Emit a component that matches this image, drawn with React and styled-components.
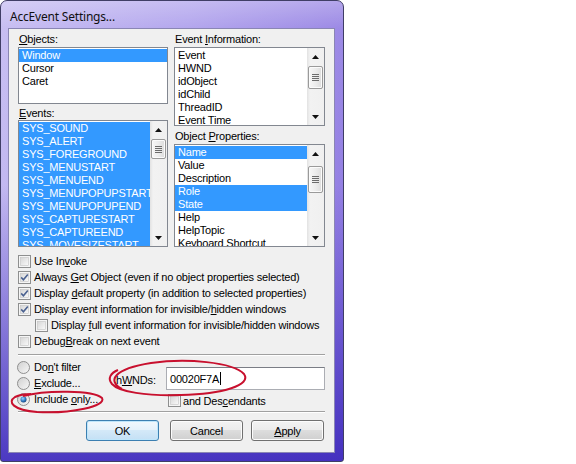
import React from 'react';
import styled, { createGlobalStyle } from 'styled-components';

const Global = createGlobalStyle`
  html, body { margin: 0; padding: 0; background: #ffffff; }
  body {
    width: 576px; height: 464px; overflow: hidden;
    font-family: "Liberation Sans", Arial, sans-serif;
    font-size: 11px; letter-spacing: -0.2px; color: #000;
  }
`;

const Window = styled.div`
  position: relative;
  width: 344px;
  height: 462px;
  box-sizing: border-box;
  border: 1px solid #403e66;
  border-radius: 7px 7px 3px 3px;
  padding: 0 8px 8px 7px;
  display: flex;
  flex-direction: column;
  background:
    linear-gradient(to bottom, rgba(255,255,255,0.3) 0px, rgba(255,255,255,0.08) 27px, rgba(70,50,190,0) 40%, rgba(55,35,185,0.85) 100%),
    linear-gradient(to right, #c3b9f1 0%, #ad9fec 55%, #9480e3 100%);
`;

const TitleBar = styled.div`
  height: 27px;
  flex: none;
  display: flex;
  align-items: center;
  padding-left: 2px;
  padding-top: 4px;
  box-sizing: border-box;
  font-family: "Noto Sans", "Open Sans", sans-serif;
  font-size: 12px;
  letter-spacing: -0.2px;
  color: #101010;
`;

const Client = styled.div`
  flex: 1;
  border: 1px solid #8a86b4;
  background: #f0f0f0;
  padding: 4px 9px 0 9px;
  display: flex;
  flex-direction: column;
`;

const TopGrid = styled.div`
  display: grid;
  grid-template-columns: 150px 151px;
  column-gap: 6px;
`;

const Column = styled.div`
  display: flex;
  flex-direction: column;
`;

const Label = styled.div`
  height: ${p => p.$h}px;
  padding-top: ${p => p.$pt || 0}px;
  padding-left: 1px;
  box-sizing: border-box;
  line-height: 13px;
  white-space: nowrap;
`;

const U = styled.span`
  text-decoration: underline;
  text-underline-offset: 1px;
`;

const ListBox = styled.div`
  height: ${p => p.$h}px;
  box-sizing: border-box;
  border: 1px solid #828790;
  background: #fff;
  display: flex;
  overflow: hidden;
`;

const Items = styled.div`
  flex: 1;
  min-width: 0;
  overflow: hidden;
  padding-top: 1px;
`;

const Item = styled.div`
  height: 13px;
  line-height: 13px;
  padding-left: 3px;
  white-space: nowrap;
  overflow: hidden;
  background: ${p => (p.$sel ? '#3399ff' : 'transparent')};
  color: ${p => (p.$sel ? '#ffffff' : '#000000')};
`;

const ScrollBar = styled.div`
  width: 17px;
  flex: none;
  display: flex;
  flex-direction: column;
  background: linear-gradient(to right, #e2e2e2 0px, #f2f2f2 3px, #f0f0f0 100%);
`;

const Arrow = styled.div`
  height: 17px;
  flex: none;
  display: flex;
  align-items: center;
  justify-content: center;
`;

const Track = styled.div`
  flex: 1;
  padding-top: ${p => p.$top}px;
`;

const Thumb = styled.div`
  height: ${p => p.$h}px;
  box-sizing: border-box;
  margin: 0 1px;
  border: 1px solid #9a9a9a;
  border-radius: 2px;
  background: linear-gradient(to right, #f7f7f7 0%, #ececec 50%, #dcdcdc 100%);
  box-shadow: inset 0 0 0 1px #fbfbfb;
  display: flex;
  align-items: center;
  justify-content: center;
`;

const Checks = styled.div`
  margin-top: 6px;
  display: flex;
  flex-direction: column;
`;

const CheckRow = styled.div`
  height: ${p => p.$h || 16}px;
  display: flex;
  align-items: center;
  gap: ${p => p.$gap || 3}px;
  padding-left: ${p => p.$indent || 0}px;
  white-space: nowrap;
  line-height: 13px;
`;

const Separator = styled.div`
  margin-top: ${p => p.$mt}px;
  height: 0;
  border-top: 1px solid #a0a0a0;
  border-bottom: 1px solid #ffffff;
`;

const Filter = styled.div`
  display: flex;
`;

const RadioGroup = styled.div`
  width: 97px;
  padding-top: 3px;
  margin-left: -1px;
  display: flex;
  flex-direction: column;
`;

const RadioRow = styled.div`
  height: 16px;
  display: flex;
  align-items: center;
  gap: 4px;
  white-space: nowrap;
`;

const HwndBlock = styled.div`
  display: flex;
  flex-direction: column;
  padding-top: 11px;
`;

const HwndRow = styled.div`
  display: flex;
  align-items: center;
`;

const HwndLabel = styled.div`
  width: 53px;
  padding-top: 3px;
  padding-left: 3px;
  box-sizing: border-box;
`;

const TextInput = styled.div`
  width: 159px;
  height: 23px;
  box-sizing: border-box;
  border: 1px solid #abadb3;
  border-top-color: #7a7d85;
  background: #fff;
  display: flex;
  align-items: center;
  padding-left: 3px;
`;

const Caret = styled.span`
  display: inline-block;
  width: 1px;
  height: 13px;
  background: #000;
  margin-left: 1px;
`;

const DescRow = styled.div`
  margin-top: 4px;
  margin-left: 55px;
  height: 13px;
  display: flex;
  align-items: center;
  gap: 2px;
  white-space: nowrap;
`;

const Buttons = styled.div`
  margin-top: 7px;
  padding-left: 68px;
  display: flex;
`;

const Button = styled.div`
  width: 73px;
  height: 21px;
  margin-left: ${p => p.$ml || 0}px;
  box-sizing: border-box;
  border: 1px solid ${p => (p.$default ? '#3c7fb1' : '#707070')};
  border-radius: 3px;
  display: flex;
  align-items: center;
  justify-content: center;
  box-shadow: inset 0 0 0 1px ${p => (p.$default ? '#bfe6fb' : '#fcfcfc')};
  background: ${p =>
    p.$default
      ? 'linear-gradient(to bottom, #f1f8fd 0%, #e4f1fb 50%, #d4e9f8 50%, #c4e0f5 100%)'
      : 'linear-gradient(to bottom, #f3f3f3 0%, #ebebeb 50%, #dddddd 50%, #cfcfcf 100%)'};
`;

const Overlay = styled.svg`
  position: absolute;
  left: 0;
  top: 0;
  width: 344px;
  height: 462px;
  pointer-events: none;
`;

const UpArrow = () => (
  <svg width="7" height="4" viewBox="0 0 7 4"><path d="M0 4 L3.5 0 L7 4 Z" fill="#111" /></svg>
);
const DownArrow = () => (
  <svg width="7" height="4" viewBox="0 0 7 4"><path d="M0 0 L3.5 4 L7 0 Z" fill="#111" /></svg>
);
const Grip = () => (
  <svg width="7" height="7" viewBox="0 0 7 7">
    {[0, 2, 4, 6].map(y => (
      <rect key={y} x="0" y={y} width="7" height="1" fill="#6b6b6b" />
    ))}
  </svg>
);

const Scroll = ({ top, h }) => (
  <ScrollBar>
    <Arrow><UpArrow /></Arrow>
    <Track $top={top}><Thumb $h={h}><Grip /></Thumb></Track>
    <Arrow><DownArrow /></Arrow>
  </ScrollBar>
);

const CheckBox = ({ checked }) => (
  <svg width="13" height="13" viewBox="0 0 13 13" style={{ flex: 'none' }}>
    <defs>
      <linearGradient id="cbg" x1="0" y1="0" x2="1" y2="1">
        <stop offset="0" stopColor="#d6d6d6" />
        <stop offset="1" stopColor="#fafafa" />
      </linearGradient>
    </defs>
    <rect x="0.5" y="0.5" width="12" height="12" fill="#f5f5f5" stroke="#8e8f8f" />
    <rect x="2.5" y="2.5" width="8" height="8" fill="url(#cbg)" stroke="#c4c4c4" strokeWidth="0.6" />
    {checked && (
      <path d="M3.2 6.4 L5.4 8.7 L9.8 3.4" fill="none" stroke="#4a6190" strokeWidth="1.6" />
    )}
  </svg>
);

const Radio = ({ checked }) => (
  <svg width="13" height="13" viewBox="0 0 13 13" style={{ flex: 'none' }}>
    <defs>
      <linearGradient id="rbg" x1="0" y1="0" x2="1" y2="1">
        <stop offset="0" stopColor="#cfcfcf" />
        <stop offset="1" stopColor="#f8f8f8" />
      </linearGradient>
      <radialGradient id="rdot" cx="0.4" cy="0.35" r="0.7">
        <stop offset="0" stopColor="#9ad2ff" />
        <stop offset="0.6" stopColor="#2f77c0" />
        <stop offset="1" stopColor="#123f73" />
      </radialGradient>
    </defs>
    <circle cx="6.5" cy="6.5" r="6" fill="url(#rbg)" stroke="#8f8f8f" />
    {checked && <circle cx="6.5" cy="6.5" r="3" fill="url(#rdot)" />}
  </svg>
);

const objects = [['Window', true], ['Cursor'], ['Caret']];
const events = [
  'SYS_SOUND', 'SYS_ALERT', 'SYS_FOREGROUND', 'SYS_MENUSTART', 'SYS_MENUEND',
  'SYS_MENUPOPUPSTART', 'SYS_MENUPOPUPEND', 'SYS_CAPTURESTART', 'SYS_CAPTUREEND',
  'SYS_MOVESIZESTART',
];
const eventInfo = ['Event', 'HWND', 'idObject', 'idChild', 'ThreadID', 'Event Time'];
const props = [
  ['Name', true], ['Value'], ['Description'], ['Role', true], ['State', true],
  ['Help'], ['HelpTopic'], ['Keyboard Shortcut'],
];

export default function App() {
  return (
    <>
      <Global />
      <Window>
        <TitleBar>AccEvent Settings...</TitleBar>
        <Client>
          <TopGrid>
            <Column>
              <Label $h={14}><U>O</U>bjects:</Label>
              <ListBox $h={57}>
                <Items>
                  {objects.map(([t, s]) => <Item key={t} $sel={s}>{t}</Item>)}
                </Items>
              </ListBox>
              <Label $h={16} $pt={3}><U>E</U>vents:</Label>
              <ListBox $h={127}>
                <Items>
                  {events.map(t => <Item key={t} $sel>{t}</Item>)}
                </Items>
                <Scroll top={1} h={20} />
              </ListBox>
            </Column>
            <Column>
              <Label $h={14}>Event <U>I</U>nformation:</Label>
              <ListBox $h={79}>
                <Items>
                  {eventInfo.map(t => <Item key={t}>{t}</Item>)}
                </Items>
                <Scroll top={1} h={23} />
              </ListBox>
              <Label $h={18} $pt={4}>Object <U>P</U>roperties:</Label>
              <ListBox $h={103}>
                <Items>
                  {props.map(([t, s]) => <Item key={t} $sel={s}>{t}</Item>)}
                </Items>
                <Scroll top={4} h={27} />
              </ListBox>
            </Column>
          </TopGrid>

          <Checks>
            <CheckRow><CheckBox /><span>Use In<U>v</U>oke</span></CheckRow>
            <CheckRow><CheckBox checked /><span>Always <U>G</U>et Object (even if no object properties selected)</span></CheckRow>
            <CheckRow><CheckBox checked /><span>Display <U>d</U>efault property (in addition to selected properties)</span></CheckRow>
            <CheckRow><CheckBox checked /><span>Display event information for invisible/<U>h</U>idden windows</span></CheckRow>
            <CheckRow $indent={17}><CheckBox /><span>Display <U>f</U>ull event information for invisible/hidden windows</span></CheckRow>
            <CheckRow><CheckBox /><span>Debug<U>B</U>reak on next event</span></CheckRow>
          </Checks>

          <Separator $mt={5} />

          <Filter>
            <RadioGroup>
              <RadioRow><Radio /><span>Do<U>n</U>'t filter</span></RadioRow>
              <RadioRow><Radio /><span><U>E</U>xclude...</span></RadioRow>
              <RadioRow><Radio checked /><span>Include <U>o</U>nly...</span></RadioRow>
            </RadioGroup>
            <HwndBlock>
              <HwndRow>
                <HwndLabel>h<U>W</U>NDs:</HwndLabel>
                <TextInput>00020F7A<Caret /></TextInput>
              </HwndRow>
              <DescRow><CheckBox /><span>and Des<U>c</U>endants</span></DescRow>
            </HwndBlock>
          </Filter>

          <Separator $mt={4} />

          <Buttons>
            <Button $default>OK</Button>
            <Button $ml={11}>Cancel</Button>
            <Button $ml={8}><span><U>A</U>pply</span></Button>
          </Buttons>
        </Client>

        <Overlay viewBox="0 0 344 462">
          <path
            d="M121 388 C106 380, 112 368, 150 362 C185 357, 232 361, 243 373 C251 384, 222 393, 180 394 C145 395, 118 391, 111 383 C106 377, 110 372, 117 369"
            fill="none" stroke="#c8102e" strokeWidth="2"
          />
          <path
            d="M22 395 C45 389, 92 389, 101 397 C106 405, 70 413, 36 411 C12 409, 6 401, 14 396 C18 394, 24 393, 30 393"
            fill="none" stroke="#c8102e" strokeWidth="2"
          />
        </Overlay>
      </Window>
    </>
  );
}
